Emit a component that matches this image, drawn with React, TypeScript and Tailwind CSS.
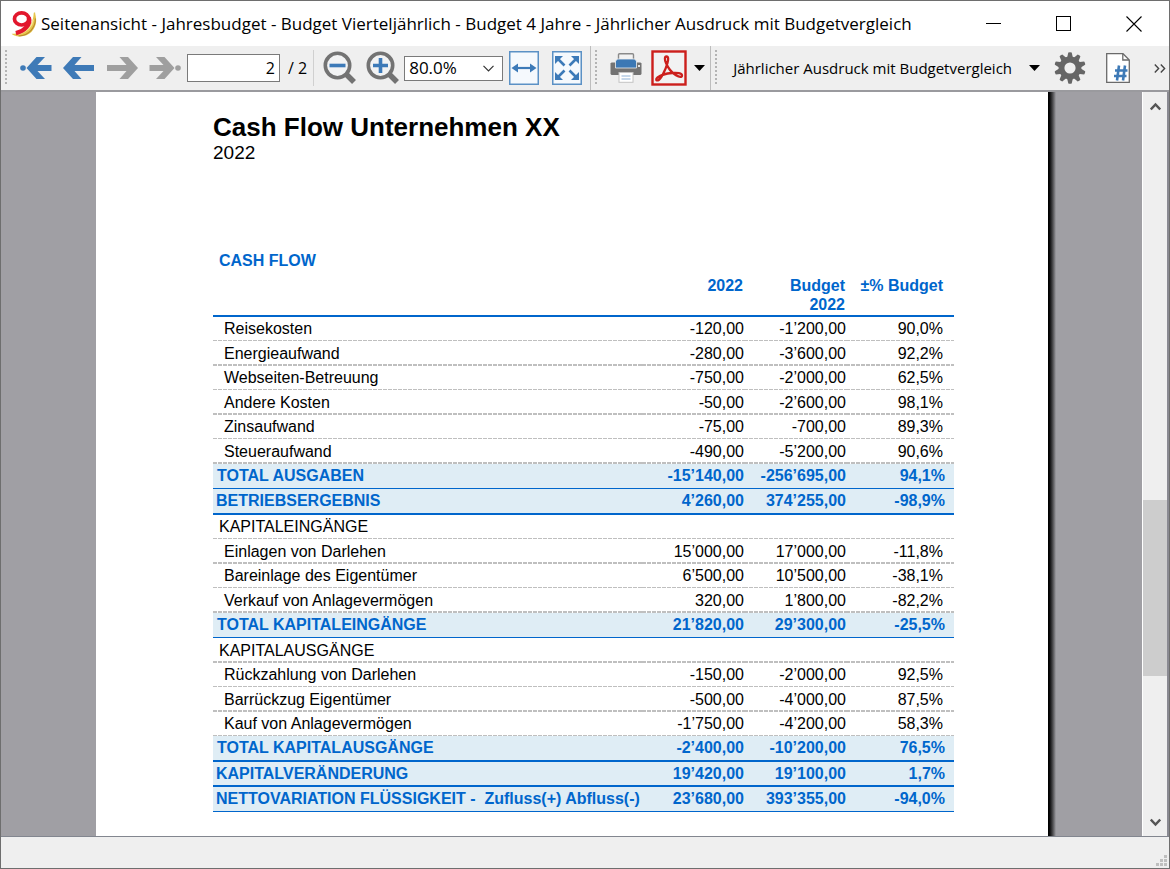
import React from "react";

type Kind = "item" | "section" | "total" | "result";
type Rule = "dash1" | "dash2" | "solid1" | "solid2" | "solid3";

interface Row {
  label: string;
  actual: string;
  budget: string;
  diff: string;
  kind: Kind;
  rule: Rule;
}

const rows: Row[] = [
  { label: "Reisekosten", actual: "-120,00", budget: "-1’200,00", diff: "90,0%", kind: "item", rule: "dash1" },
  { label: "Energieaufwand", actual: "-280,00", budget: "-3’600,00", diff: "92,2%", kind: "item", rule: "dash2" },
  { label: "Webseiten-Betreuung", actual: "-750,00", budget: "-2’000,00", diff: "62,5%", kind: "item", rule: "dash1" },
  { label: "Andere Kosten", actual: "-50,00", budget: "-2’600,00", diff: "98,1%", kind: "item", rule: "dash2" },
  { label: "Zinsaufwand", actual: "-75,00", budget: "-700,00", diff: "89,3%", kind: "item", rule: "dash1" },
  { label: "Steueraufwand", actual: "-490,00", budget: "-5’200,00", diff: "90,6%", kind: "item", rule: "dash2" },
  { label: "TOTAL AUSGABEN", actual: "-15’140,00", budget: "-256’695,00", diff: "94,1%", kind: "total", rule: "solid1" },
  { label: "BETRIEBSERGEBNIS", actual: "4’260,00", budget: "374’255,00", diff: "-98,9%", kind: "result", rule: "solid2" },
  { label: "KAPITALEINGÄNGE", actual: "", budget: "", diff: "", kind: "section", rule: "dash1" },
  { label: "Einlagen von Darlehen", actual: "15’000,00", budget: "17’000,00", diff: "-11,8%", kind: "item", rule: "dash2" },
  { label: "Bareinlage des Eigentümer", actual: "6’500,00", budget: "10’500,00", diff: "-38,1%", kind: "item", rule: "dash1" },
  { label: "Verkauf von Anlagevermögen", actual: "320,00", budget: "1’800,00", diff: "-82,2%", kind: "item", rule: "dash2" },
  { label: "TOTAL KAPITALEINGÄNGE", actual: "21’820,00", budget: "29’300,00", diff: "-25,5%", kind: "total", rule: "solid1" },
  { label: "KAPITALAUSGÄNGE", actual: "", budget: "", diff: "", kind: "section", rule: "dash2" },
  { label: "Rückzahlung von Darlehen", actual: "-150,00", budget: "-2’000,00", diff: "92,5%", kind: "item", rule: "dash1" },
  { label: "Barrückzug Eigentümer", actual: "-500,00", budget: "-4’000,00", diff: "87,5%", kind: "item", rule: "dash2" },
  { label: "Kauf von Anlagevermögen", actual: "-1’750,00", budget: "-4’200,00", diff: "58,3%", kind: "item", rule: "dash1" },
  { label: "TOTAL KAPITALAUSGÄNGE", actual: "-2’400,00", budget: "-10’200,00", diff: "76,5%", kind: "total", rule: "solid2" },
  { label: "KAPITALVERÄNDERUNG", actual: "19’420,00", budget: "19’100,00", diff: "1,7%", kind: "result", rule: "solid3" },
  { label: "NETTOVARIATION FLÜSSIGKEIT -\u00a0 Zufluss(+) Abfluss(-)", actual: "23’680,00", budget: "393’355,00", diff: "-94,0%", kind: "result", rule: "solid1" },
];

const ruleClass: Record<Rule, string> = {
  dash1:
    "h-6 bg-[repeating-linear-gradient(90deg,#bfbfbf_0_4px,transparent_4px_5px)] bg-[length:100%_1px] bg-bottom bg-no-repeat pb-0.5",
  dash2:
    "h-[25px] bg-[repeating-linear-gradient(90deg,#bfbfbf_0_4px,transparent_4px_5px)] bg-[length:100%_2px] bg-bottom bg-no-repeat",
  solid1: "h-[25px] border-b border-[#0066cc] pb-0.5",
  solid2: "h-[26px] border-b-2 border-[#0066cc] pb-0.5",
  solid3: "h-[25px] border-b-2 border-[#0066cc]",
};

const labelClass: Record<Kind, string> = {
  item: "pl-[11px]",
  section: "pl-1.5",
  total: "pl-1",
  result: "pl-[3px]",
};

function Grip() {
  return (
    <div className="mx-1 h-9 w-0.5 shrink-0 bg-[repeating-linear-gradient(180deg,#b4b4b4_0_2px,transparent_2px_4px)]" />
  );
}

function BananaNine() {
  return (
    <svg className="size-[26px] shrink-0" viewBox="0 0 24 24" aria-hidden="true">
      <path d="M21 1.500 22.200 1.200C22.500 4 23.400 6 23.200 9.500 22.800 17 17 23.500 8.500 23.500 4.500 23.600 1.500 22.300.6 21 7 21 14 18.500 17.500 13.500 20 10 20.800 5.500 21 1.500Z" fill="#e6c64d" />
      <path d="M22.500 7C22.700 15 17 22.500 7 23" fill="none" stroke="#b88a2c" strokeWidth="1" />
      <path d="M20.500 8C19.500 14 15 19 7 21.500" fill="none" stroke="#f8e99a" strokeWidth="1.200" />
      <ellipse cx="9.800" cy="7.300" rx="6.600" ry="5.600" fill="#fff" stroke="#e2182d" strokeWidth="3.400" />
      <path d="M16.400 6C18.500 12 13 18.500 4.500 20.500" fill="none" stroke="#e2182d" strokeWidth="4" />
    </svg>
  );
}

function Arrow({ color, right, dot }: { color: string; right?: boolean; dot?: boolean }) {
  return (
    <svg className={right ? "h-6 w-8 -scale-x-100" : "h-6 w-8"} viewBox="0 0 32 24" aria-hidden="true">
      {dot && <circle cx="3" cy="12" r="2.800" fill={color} />}
      <path
        d={dot ? "M6.500 12 16.500 1H25L17.500 9H31.500V15H17.500L25 23H16.500Z" : "M0 12 10 1H18.500L11.500 9H31V15H11.500L18.500 23H10Z"}
        fill={color}
      />
    </svg>
  );
}

function Magnifier({ plus }: { plus?: boolean }) {
  return (
    <svg className="size-[34px]" viewBox="0 0 34 34" aria-hidden="true">
      <path d="M23.500 23.500 31 31" stroke="#737373" strokeWidth="5.500" />
      <circle cx="14.500" cy="14.500" r="12.200" fill="#f2f3f4" stroke="#737373" strokeWidth="3.600" />
      <path d={plus ? "M7 14.500H22M14.500 7V22" : "M6.500 14.500H22.500"} stroke="#3d7ab8" strokeWidth="3.600" />
    </svg>
  );
}

function FitWidth() {
  return (
    <svg className="h-[34px] w-[30px]" viewBox="0 0 30 34" aria-hidden="true">
      <rect x="0.750" y="0.750" width="28.500" height="32.500" fill="#f5f9fd" stroke="#5b91c5" strokeWidth="1.500" />
      <path d="M5 17H25" stroke="#3c7ab8" strokeWidth="2.200" />
      <path d="M2.500 17 9 12.500V21.500ZM27.500 17 21 12.500V21.500Z" fill="#3c7ab8" />
    </svg>
  );
}

function FitPage() {
  return (
    <svg className="h-[34px] w-[30px]" viewBox="0 0 30 34" aria-hidden="true">
      <rect x="0.750" y="0.750" width="28.500" height="32.500" fill="#f5f9fd" stroke="#5b91c5" strokeWidth="1.500" />
      <path d="M6 8 12.500 14.500M24 8 17.500 14.500M6 26 12.500 19.500M24 26 17.500 19.500" stroke="#3c7ab8" strokeWidth="2.600" />
      <path d="M3 5H11L3 13ZM27 5H19L27 13ZM3 29H11L3 21ZM27 29H19L27 21Z" fill="#3c7ab8" />
    </svg>
  );
}

function Printer() {
  return (
    <svg className="h-[30px] w-8" viewBox="0 0 32 30" aria-hidden="true">
      <rect x="8.500" y="0.700" width="15" height="10" rx="1" fill="#f2f2f2" stroke="#8a8a8a" strokeWidth="1.400" />
      <path d="M1.500 9.500H30.500L31.500 10.500V21L30.500 22H1.500L.5 21V10.500Z" fill="#737373" />
      <path d="M7.500 6H24.500L26.500 8V15H5.500V8Z" fill="#3c78b4" stroke="#efefef" strokeWidth="0.800" />
      <rect x="28" y="12" width="2" height="2" fill="#e5e5e5" />
      <rect x="9" y="19.500" width="14" height="9.800" fill="#fff" stroke="#c4c4c4" />
      <path d="M11.500 23H20.500M11.500 26H20.500" stroke="#8db1d8" strokeWidth="1.200" />
    </svg>
  );
}

function PdfIcon() {
  return (
    <svg className="size-9" viewBox="0 0 36 36" aria-hidden="true">
      <rect x="1.500" y="1.500" width="33" height="33" fill="#f2f2f2" stroke="#cc1f1c" strokeWidth="2.400" />
      <path
        d="M15.500 6.500C13.500 6.500 13.500 10 15 13 17 18 20.500 22.500 25 25.200 28.500 27.300 31 27.500 31 25.500 31 23 26 22.500 21 23 15 23.500 9.500 25.300 6.500 27.500 4.500 29 5 31 7 30.300 10 29.300 14.500 20 16.500 13 17.500 9.500 17.500 6.500 15.500 6.500Z"
        fill="none"
        stroke="#cc1f1c"
        strokeWidth="2.300"
        strokeLinejoin="round"
      />
    </svg>
  );
}

function Gear() {
  return (
    <svg className="size-8" viewBox="-16 -16 32 32" aria-hidden="true">
      {[0, 36, 72, 108, 144, 180, 216, 252, 288, 324].map((angle) => (
        <path key={angle} d="M-3.200-9 -1.700-15.400Q0-16.200 1.700-15.400L3.200-9Z" fill="#666" transform={`rotate(${angle})`} />
      ))}
      <circle r="8.500" fill="none" stroke="#666" strokeWidth="5.800" />
    </svg>
  );
}

function SheetNumber() {
  return (
    <svg className="h-[30px] w-6" viewBox="0 0 24 30" aria-hidden="true">
      <path d="M.7.700H17L23.300 7V29.300H.7Z" fill="#fff" stroke="#6a6a6a" strokeWidth="1.300" />
      <path d="M16.800 1V7H23" fill="none" stroke="#6a6a6a" strokeWidth="1.300" />
      <path d="M13 12.500 11 27.500M19 12.500 17 27.500M9 17.500H21.500M8 23H20.500" stroke="#3e7ab7" strokeWidth="2.600" />
    </svg>
  );
}

function Caret() {
  return (
    <svg className="h-1.5 w-[11px]" viewBox="0 0 11 6" aria-hidden="true">
      <path d="M0 0H11L5.500 6Z" fill="#000" />
    </svg>
  );
}

function Chevron({ up }: { up?: boolean }) {
  return (
    <svg className="h-[9px] w-[11px]" viewBox="0 0 11 9" aria-hidden="true">
      <path d={up ? "M.8 7.500 5.500 2.500 10.200 7.500" : "M.8 1.500 5.500 6.500 10.200 1.500"} fill="none" stroke="#555" strokeWidth="2.400" />
    </svg>
  );
}

function TitleBar() {
  return (
    <header className="flex h-[45px] shrink-0 items-center bg-white pl-[10px]">
      <BananaNine />
      <h1 className="ml-1 flex-1 truncate text-[17px] leading-6">
        Seitenansicht - Jahresbudget - Budget Vierteljährlich - Budget 4 Jahre - Jährlicher Ausdruck mit Budgetvergleich
      </h1>
      <button aria-label="Minimieren" className="flex h-full w-[70px] items-center justify-center">
        <svg className="size-4" viewBox="0 0 16 16">
          <path d="M0 7.500H15" stroke="#000" />
        </svg>
      </button>
      <button aria-label="Maximieren" className="flex h-full w-[70px] items-center justify-center">
        <svg className="size-4" viewBox="0 0 16 16">
          <rect x="0.500" y="0.500" width="14" height="14" fill="none" stroke="#000" />
        </svg>
      </button>
      <button aria-label="Schliessen" className="flex h-full w-[70px] items-center justify-center">
        <svg className="size-4" viewBox="0 0 16 16">
          <path d="M.5.500 15.500 15.500M15.500 .500.5 15.500" stroke="#000" strokeWidth="1.100" />
        </svg>
      </button>
    </header>
  );
}

function Toolbar() {
  return (
    <div role="toolbar" aria-label="Seitenansicht" className="flex h-[46px] shrink-0 items-center border-b-2 border-[#9a9a9e] bg-[#efefef] text-base">
      <Grip />
      <div className="ml-[9px] flex items-center gap-[11px]">
        <button aria-label="Erste Seite"><Arrow color="#3e7ab7" dot /></button>
        <button aria-label="Vorherige Seite"><Arrow color="#3e7ab7" /></button>
        <button aria-label="Nächste Seite"><Arrow color="#9f9f9f" right /></button>
        <button aria-label="Letzte Seite"><Arrow color="#9f9f9f" right dot /></button>
      </div>
      <input aria-label="Seite" defaultValue="2" className="ml-[6px] h-7 w-[93px] border border-[#7a7a7a] bg-white pr-1 text-right" />
      <span className="ml-2 whitespace-nowrap">/ 2</span>
      <div className="ml-1.5 h-9 w-px bg-[#d0d0d0]" />
      <div className="ml-[9px] flex items-center gap-[9px]">
        <button aria-label="Verkleinern"><Magnifier /></button>
        <button aria-label="Vergrössern"><Magnifier plus /></button>
      </div>
      <div className="ml-1 grid h-[25px] w-[99px] items-center border border-[#7a7a7a] bg-white">
        <select aria-label="Zoom" className="col-start-1 row-start-1 h-full w-full appearance-none pl-1 text-[17px] leading-[22px] outline-none">
          <option>80.0%</option>
        </select>
        <svg className="pointer-events-none col-start-1 row-start-1 mr-2 h-[7px] w-[11px] justify-self-end" viewBox="0 0 11 7">
          <path d="M.5.800 5.500 5.800 10.500.8" fill="none" stroke="#333" strokeWidth="1.200" />
        </svg>
      </div>
      <button aria-label="Seitenbreite" className="ml-[6px]"><FitWidth /></button>
      <button aria-label="Ganze Seite" className="ml-[13px]"><FitPage /></button>
      <div className="ml-2 h-full w-px bg-[#bdbdbd]" />
      <Grip />
      <button aria-label="Drucken" className="ml-[9px]"><Printer /></button>
      <button aria-label="PDF erstellen" className="ml-[9px]"><PdfIcon /></button>
      <button aria-label="Weitere Exportformate" className="ml-[7px]"><Caret /></button>
      <div className="ml-[5px] h-full w-px bg-[#bdbdbd]" />
      <Grip />
      <button className="ml-[12px] flex items-center gap-[17px] text-[15px] whitespace-nowrap">
        Jährlicher Ausdruck mit Budgetvergleich
        <Caret />
      </button>
      <button aria-label="Einstellungen" className="ml-[14px]"><Gear /></button>
      <button aria-label="Seitennummern" className="ml-5"><SheetNumber /></button>
      <button aria-label="Mehr" className="mr-[3px] ml-auto">
        <svg className="h-[9px] w-3" viewBox="0 0 12 9">
          <path d="M.8.600 4.600 4.500.8 8.400M6.800.600 10.600 4.500 6.800 8.400" fill="none" stroke="#444" strokeWidth="1.400" />
        </svg>
      </button>
    </div>
  );
}

function CashFlowTable() {
  return (
    <table className="w-full table-fixed border-separate border-spacing-0 text-base leading-[19px]">
      <caption className="pb-[6px] pl-1.5 text-left font-bold text-[#0066cc]">CASH FLOW</caption>
      <colgroup>
        <col />
        <col className="w-[102px]" />
        <col className="w-[102px]" />
        <col className="w-[108px]" />
      </colgroup>
      <thead className="align-top font-bold text-[#0066cc]">
        <tr>
          <td className="h-[41px] border-b-2 border-[#0066cc]" />
          <th className="border-b-2 border-[#0066cc] pr-px text-right">2022</th>
          <th className="border-b-2 border-[#0066cc] pr-px pl-6 text-right">Budget 2022</th>
          <th className="border-b-2 border-[#0066cc] pr-[11px] text-right whitespace-nowrap">±% Budget</th>
        </tr>
      </thead>
      <tbody>
        {rows.map((row) => {
          const strong = row.kind === "total" || row.kind === "result";
          const cell = ruleClass[row.rule];
          return (
            <tr key={row.label} className={strong ? "bg-[#dfedf5] font-bold text-[#0066cc]" : ""}>
              <td className={`${cell} ${labelClass[row.kind]} whitespace-nowrap`}>{row.label}</td>
              <td className={`${cell} text-right`}>{row.actual}</td>
              <td className={`${cell} text-right`}>{row.budget}</td>
              <td className={`${cell} ${strong ? "pr-[9px]" : "pr-[11px]"} text-right`}>{row.diff}</td>
            </tr>
          );
        })}
      </tbody>
    </table>
  );
}

export default function App() {
  return (
    <div className="flex h-screen flex-col border border-[#6e6e6e] bg-[#efefef] font-['Open_Sans','Noto_Sans',sans-serif] text-black">
      <TitleBar />
      <Toolbar />
      <div className="flex min-h-0 flex-1 border-b border-[#82868f]">
        <main className="flex min-w-0 flex-1 overflow-hidden bg-[#a09fa4] pr-[86px] pl-[95px]">
          <article className="min-w-0 flex-1 bg-white pt-5 pr-[94px] pl-[117px] font-['Liberation_Sans',sans-serif]">
            <h2 className="text-[26px] leading-[30px] font-bold">Cash Flow Unternehmen XX</h2>
            <p className="text-[19px] leading-[22px]">2022</p>
            <div className="pt-[87px]">
              <CashFlowTable />
            </div>
          </article>
          <div className="w-2 bg-linear-to-r from-black to-[#a09fa4]" />
        </main>
        <div className="flex w-[27px] flex-col items-center border-r-2 border-l border-r-[#8a8a92] border-l-white bg-[#efefef]">
          <button aria-label="Nach oben" className="flex h-7 items-center"><Chevron up /></button>
          <div className="flex w-full flex-1 flex-col">
            <div className="flex-[380]" />
            <div className="flex-[176] bg-[#cdcdcd]" />
            <div className="flex-[132]" />
          </div>
          <button aria-label="Nach unten" className="flex h-7 items-center"><Chevron /></button>
        </div>
      </div>
      <footer className="flex h-[31px] shrink-0 items-end justify-end bg-[#efefef] p-0.5">
        <svg className="size-[11px]" viewBox="0 0 11 11" aria-hidden="true">
          <path d="M8 0h3v3H8zM4 4h3v3H4zM8 4h3v3H8zM0 8h3v3H0zM4 8h3v3H4zM8 8h3v3H8z" fill="#bfbfbf" />
        </svg>
      </footer>
    </div>
  );
}
